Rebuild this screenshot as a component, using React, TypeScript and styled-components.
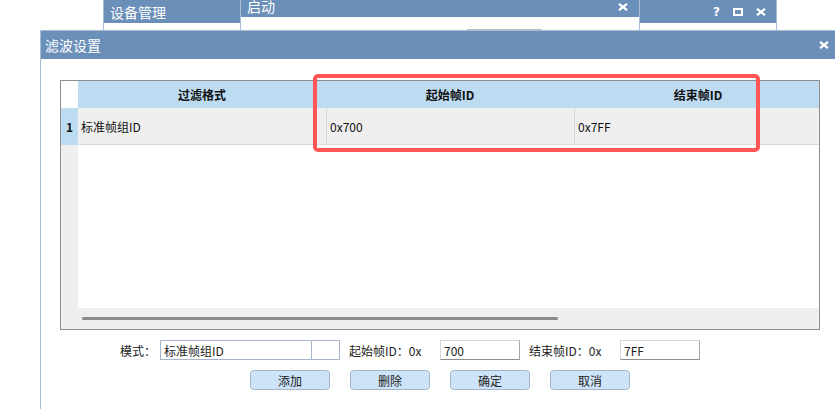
import React from "react";
import styled, { createGlobalStyle } from "styled-components";

const Global = createGlobalStyle`
  html, body { margin: 0; padding: 0; background: #ffffff; }
  body { font-family: "Noto Sans CJK SC", "Noto Sans", sans-serif; }
  * { box-sizing: border-box; }
`;

const TITLE_BLUE = "#6a8fb9";
const EDGE = "#aabdd3";

const Desktop = styled.div`
  position: relative;
  width: 835px;
  height: 409px;
  overflow: hidden;
  background: #fff;
`;

const BgWindow = styled.div<{ $left: number; $width: number }>`
  position: absolute;
  top: 0;
  left: ${(p) => p.$left}px;
  width: ${(p) => p.$width}px;
  height: 31px;
  background: #fff;
  border-left: 1px solid ${EDGE};
  border-right: 1px solid ${EDGE};
  display: flex;
  flex-direction: column;
`;

const BgTitle = styled.div<{ $h: number }>`
  height: ${(p) => p.$h}px;
  background: ${TITLE_BLUE};
  color: #fff;
  display: flex;
  align-items: center;
  padding: 0 10px 0 6px;
  font-size: 14px;
  line-height: 14px;
  overflow: hidden;
`;

const ClippedTitle = styled.span`
  margin-top: -6px;
`;

const Spacer = styled.div`
  flex: 1;
`;

const IconRow = styled.div`
  display: flex;
  align-items: center;
  gap: 13px;
`;

const Help = styled.span`
  font-family: "DejaVu Sans", sans-serif;
  font-weight: bold;
  font-size: 12px;
  color: #fff;
  line-height: 12px;
`;

const HiddenButtonEdge = styled.div`
  margin-top: auto;
  margin-left: 226px;
  width: 75px;
  height: 2px;
  background: #b9bcc2;
`;

const Dialog = styled.div`
  position: absolute;
  left: 40px;
  top: 30px;
  right: 0;
  bottom: 0;
  background: #fff;
  border-left: 1px solid ${EDGE};
  border-top: 1px solid ${EDGE};
  display: flex;
  flex-direction: column;
`;

const DialogTitle = styled.div`
  height: 28px;
  background: ${TITLE_BLUE};
  color: #fff;
  display: flex;
  align-items: center;
  padding: 0 6px 0 4px;
  font-size: 14px;
`;

const Body = styled.div`
  padding: 21px 0 0 19px;
  display: flex;
  flex-direction: column;
`;

const TableWrap = styled.div`
  position: relative;
  width: 760px;
  height: 250px;
`;

const Table = styled.div`
  width: 100%;
  height: 100%;
  border: 1px solid #8e8e8e;
  display: flex;
  flex-direction: column;
  overflow: hidden;
  font-size: 12px;
  color: #111;
`;

const Grid = styled.div<{ $h: number }>`
  display: grid;
  grid-template-columns: 17px 248px 248px 248px;
  height: ${(p) => p.$h}px;
  flex: none;
`;

const Corner = styled.div`
  background: #fff;
`;

const HeadCell = styled.div`
  background: #bddcf2;
  font-weight: bold;
  display: flex;
  align-items: center;
  justify-content: center;
`;

const RowNum = styled.div`
  background: #bddcf2;
  font-weight: bold;
  display: flex;
  align-items: center;
  justify-content: center;
`;

const Cell = styled.div<{ $sep?: boolean }>`
  background: #efefef;
  border-bottom: 1px solid #d9d9d9;
  border-left: ${(p) => (p.$sep ? "1px solid #d6d6d6" : "none")};
  display: flex;
  align-items: center;
  padding-left: ${(p) => (p.$sep ? 3 : 3)}px;
  white-space: nowrap;
`;

const Filler = styled.div`
  flex: 1;
  display: grid;
  grid-template-columns: 17px 1fr;
`;

const GutterFill = styled.div`
  background: #efefef;
`;

const ScrollArea = styled.div`
  height: 21px;
  flex: none;
  background: #efefef;
  padding: 9px 0 0 21px;
`;

const Thumb = styled.div`
  width: 476px;
  height: 3px;
  border-radius: 2px;
  background: #8a8a8a;
`;

const Highlight = styled.div`
  position: absolute;
  left: 253px;
  top: -6px;
  width: 447px;
  height: 78px;
  border: 4px solid #ff5555;
  border-radius: 5px;
  pointer-events: none;
`;

const FormRow = styled.div`
  display: flex;
  align-items: center;
  height: 20px;
  margin-top: 10px;
  padding-left: 60px;
  font-size: 12px;
  color: #222;
`;

const Label = styled.span<{ $w: number; $pad?: number }>`
  width: ${(p) => p.$w}px;
  padding-left: ${(p) => p.$pad ?? 0}px;
  white-space: nowrap;
  flex: none;
`;

const Combo = styled.div`
  width: 180px;
  height: 20px;
  border: 1px solid #a7b5c8;
  display: flex;
  flex: none;
  background: #fff;
`;

const ComboText = styled.div`
  flex: 1;
  padding-left: 3px;
  display: flex;
  align-items: center;
  border-right: 1px solid #a7b5c8;
`;

const ComboDrop = styled.div`
  width: 27px;
`;

const TextBox = styled.div`
  width: 80px;
  height: 20px;
  flex: none;
  border: 1px solid;
  border-color: #d6d6d6 #a8a8a8 #8e8e8e #d6d6d6;
  padding-left: 3px;
  display: flex;
  align-items: center;
  background: #fff;
`;

const ButtonRow = styled.div`
  display: flex;
  gap: 20px;
  margin-top: 10px;
  padding-left: 190px;
`;

const Button = styled.div`
  width: 80px;
  height: 20px;
  background: #cde4f8;
  border: 1px solid #a3b4c8;
  border-radius: 4px;
  display: flex;
  align-items: center;
  justify-content: center;
  font-size: 12px;
  color: #222;
`;

const Cross = ({ w = 10, h = 8 }: { w?: number; h?: number }) => (
  <svg width={w} height={h} viewBox={`0 0 ${w} ${h}`}>
    <path
      d={`M1 0.8 L${w - 1} ${h - 0.8} M${w - 1} 0.8 L1 ${h - 0.8}`}
      stroke="#fff"
      strokeWidth="2.2"
      fill="none"
    />
  </svg>
);

const Maximize = () => (
  <svg width="10" height="8" viewBox="0 0 10 8">
    <rect x="1" y="1" width="8" height="6" stroke="#fff" strokeWidth="2" fill="none" />
  </svg>
);

export default function App() {
  return (
    <>
      <Global />
      <Desktop>
        <BgWindow $left={103} $width={138}>
          <BgTitle $h={23}>设备管理</BgTitle>
        </BgWindow>
        <BgWindow $left={240} $width={400}>
          <BgTitle $h={17}>
            <ClippedTitle>启动</ClippedTitle>
            <Spacer />
            <span style={{ marginTop: -7, marginRight: 1 }}>
              <Cross w={10} h={8} />
            </span>
          </BgTitle>
          <HiddenButtonEdge />
        </BgWindow>
        <BgWindow $left={639} $width={138}>
          <BgTitle $h={23}>
            <Spacer />
            <IconRow>
              <Help>?</Help>
              <Maximize />
              <Cross w={10} h={8} />
            </IconRow>
          </BgTitle>
        </BgWindow>

        <Dialog>
          <DialogTitle>
            滤波设置
            <Spacer />
            <Cross w={10} h={8} />
          </DialogTitle>
          <Body>
            <TableWrap>
              <Table>
                <Grid $h={27}>
                  <Corner />
                  <HeadCell>过滤格式</HeadCell>
                  <HeadCell>起始帧ID</HeadCell>
                  <HeadCell>结束帧ID</HeadCell>
                </Grid>
                <Grid $h={37}>
                  <RowNum>1</RowNum>
                  <Cell>标准帧组ID</Cell>
                  <Cell $sep>0x700</Cell>
                  <Cell $sep>0x7FF</Cell>
                </Grid>
                <Filler>
                  <GutterFill />
                  <div />
                </Filler>
                <ScrollArea>
                  <Thumb />
                </ScrollArea>
              </Table>
              <Highlight />
            </TableWrap>

            <FormRow>
              <Label $w={40}>模式：</Label>
              <Combo>
                <ComboText>标准帧组ID</ComboText>
                <ComboDrop />
              </Combo>
              <Label $w={100} $pad={9}>起始帧ID：0x</Label>
              <TextBox>700</TextBox>
              <Label $w={100} $pad={9}>结束帧ID：0x</Label>
              <TextBox>7FF</TextBox>
            </FormRow>

            <ButtonRow>
              <Button>添加</Button>
              <Button>删除</Button>
              <Button>确定</Button>
              <Button>取消</Button>
            </ButtonRow>
          </Body>
        </Dialog>
      </Desktop>
    </>
  );
}
